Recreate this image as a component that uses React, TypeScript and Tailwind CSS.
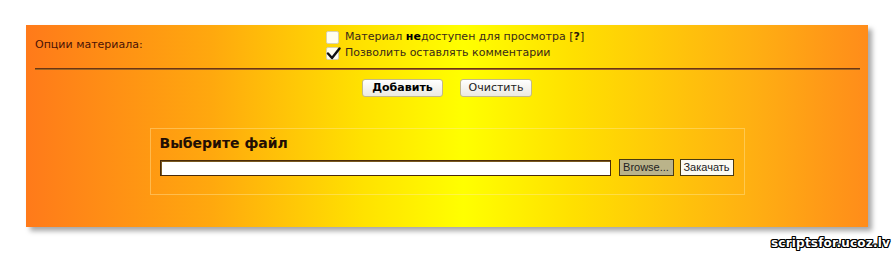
import React from 'react';

const FONT = "font-['DejaVu_Sans','Verdana',sans-serif]";

function Check({ checked }: { checked?: boolean }) {
  return (
    <span className="relative w-[13px] h-[13px] rounded-[2px] border border-[#d8d2b0] bg-[#fffef0] shrink-0">
      {checked && (
        <svg className="absolute left-[-1px] top-[-2px] w-[15px] h-[15px]" viewBox="0 0 15 15">
          <path d="M2 7.5 L6 12 L13.5 2.5" fill="none" stroke="#111" strokeWidth={2.4} strokeLinecap="round" strokeLinejoin="round" />
        </svg>
      )}
    </span>
  );
}

export default function App() {
  return (
    <div className={`w-[895px] h-[253px] bg-white pt-[25px] pl-[26px] overflow-hidden ${FONT}`}>
      <div className="w-[842px] h-[202px] bg-[linear-gradient(to_right,#ff7a1a_0%,#ffa80e_22%,#ffe200_40%,#ffff00_52%,#ffe000_65%,#ffb012_86%,#ff8c1a_100%)] shadow-[4px_4px_5px_rgba(0,0,0,0.35)] flex flex-col">
        {/* опции */}
        <div className="flex items-center pt-[4px] pl-[9px]">
          <div className="w-[291px] text-[11px] text-[#4a1206]">Опции материала:</div>
          <div className="flex flex-col text-[11px] text-[#3a2a18] leading-[16px]">
            <label className="flex items-center gap-[6px]">
              <Check />
              <span>
                Материал <b className="text-black">не</b>доступен для просмотра <span className="text-[#2a1a08]">[<b>?</b>]</span>
              </span>
            </label>
            <label className="flex items-center gap-[6px]">
              <Check checked />
              <span>Позволить оставлять комментарии</span>
            </label>
          </div>
        </div>

        <div className="mx-[9px] mr-[8px] mt-[7px] h-[2px] bg-[#6a3514] border-b border-[#a0641e]" />

        {/* кнопки */}
        <div className="flex justify-center gap-[17px] mt-[9px] text-[11px] text-black">
          <button className="w-[81px] h-[18px] rounded-[3px] border border-[#c2b98a] bg-[linear-gradient(#ffffff,#ebe9e0)] font-bold leading-[16px]">
            Добавить
          </button>
          <button className="w-[72px] h-[18px] rounded-[3px] border border-[#c2b98a] bg-[linear-gradient(#ffffff,#ebe9e0)] leading-[16px] text-[#222]">
            Очистить
          </button>
        </div>

        {/* загрузка файла */}
        <div className="mx-auto mt-[31px] w-[595px] h-[67px] border border-[rgba(255,235,170,0.4)] px-[9px] pt-[5px]">
          <div className="text-[14px] font-bold leading-[18px] text-[#220e04]">Выберите файл</div>
          <div className="flex items-center mt-[7px] font-['Liberation_Sans',Arial,sans-serif] text-[11px]">
            <div className="w-[451px] h-[16px] bg-white border border-[#4a2a08] shadow-[inset_1px_1px_0_#7a5a20]" />
            <button className="ml-[8px] w-[55px] h-[17px] bg-[#bab38a] border border-[#4a3a10] text-[#222] leading-[15px]">
              Browse...
            </button>
            <button className="ml-[6px] w-[54px] h-[17px] bg-[#fbfaf2] border border-[#4a3a10] text-[#222] leading-[15px]">
              Закачать
            </button>
          </div>
        </div>
      </div>

      <div className="flex justify-end pr-[5px] mt-[7px]">
        <span className="text-[12px] font-bold text-white tracking-[0.2px] [text-shadow:1px_0_0_#000,-1px_0_0_#000,0_1px_0_#000,0_-1px_0_#000,1px_1px_0_#000,-1px_-1px_0_#000,1px_-1px_0_#000,-1px_1px_0_#000]">
          scriptsfor.ucoz.lv
        </span>
      </div>
    </div>
  );
}
